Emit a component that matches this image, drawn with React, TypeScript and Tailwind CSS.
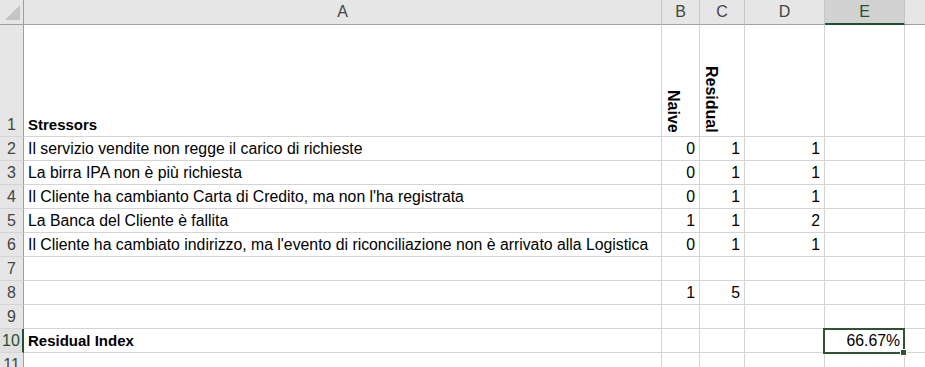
import React from "react";

type Row = {
  n: number;
  a?: string;
  b?: string;
  c?: string;
  d?: string;
};

const rows: Row[] = [
  { n: 2, a: "Il servizio vendite non regge il carico di richieste", b: "0", c: "1", d: "1" },
  { n: 3, a: "La birra IPA non è più richiesta", b: "0", c: "1", d: "1" },
  { n: 4, a: "Il Cliente ha cambianto Carta di Credito, ma non l'ha registrata", b: "0", c: "1", d: "1" },
  { n: 5, a: "La Banca del Cliente è fallita", b: "1", c: "1", d: "2" },
  { n: 6, a: "Il Cliente ha cambiato indirizzo, ma l'evento di riconciliazione non è arrivato alla Logistica", b: "0", c: "1", d: "1" },
  { n: 7 },
  { n: 8, b: "1", c: "5" },
  { n: 9 },
];

const cols = "grid-cols-[24px_638px_38px_45px_80px_80px_1fr]";
const cell = "border-r border-b border-[#d4d4d4] flex items-end px-[4px] pb-[1px] text-[15.8px] leading-[20px] text-black whitespace-nowrap";
const num = cell + " justify-end";
const bold = "border-r border-b border-[#d4d4d4] flex items-end px-[4px] pb-[1px] text-[15px] leading-[20px] text-black font-bold";
const rowHead =
  "border-r border-b border-r-[#9f9f9f] border-b-[#d4d4d4] bg-[#e6e6e6] flex items-end justify-center pb-[1px] text-[16px] leading-[20px] text-[#444]";

function Corner() {
  return (
    <div className="h-[25px] bg-[#e6e6e6] border-r border-b border-[#9f9f9f] flex items-end justify-end pr-[3px] pb-[4px]">
      <svg width="15" height="15" viewBox="0 0 15 15">
        <polygon points="15,0 15,15 0,15" fill="#c4c4c4" />
      </svg>
    </div>
  );
}

function ColHead({ label, active }: { label: string; active?: boolean }) {
  return (
    <div
      className={
        active
          ? "h-[25px] bg-[#d2d2d2] border-r border-r-[#c4c4c4] border-b-2 border-b-[#1f5130] flex items-center justify-center text-[16px] text-[#1f5130]"
          : "h-[25px] bg-[#e6e6e6] border-r border-r-[#c8c8c8] border-b border-b-[#9f9f9f] flex items-center justify-center text-[16px] text-[#444]"
      }
    >
      {label}
    </div>
  );
}

export default function App() {
  return (
    <div
      className="w-[925px] h-[367px] overflow-hidden bg-white"
      style={{ fontFamily: '"Liberation Sans", Arial, sans-serif' }}
    >
      <div className={`grid ${cols}`}>
        <Corner />
        <ColHead label="A" />
        <ColHead label="B" />
        <ColHead label="C" />
        <ColHead label="D" />
        <ColHead label="E" active />
        <div className="h-[25px] bg-[#e6e6e6] border-b border-[#9f9f9f]" />

        {/* row 1: tall header row with rotated labels */}
        <div className={rowHead + " h-[112px]"}>1</div>
        <div className={bold}>Stressors</div>
        <div className="border-r border-b border-[#d4d4d4] flex items-end pl-[5px] pb-[3px]">
          <span className="[writing-mode:vertical-rl] font-bold text-[16px] leading-[12px]">Naive</span>
        </div>
        <div className="border-r border-b border-[#d4d4d4] flex items-end pl-[5px] pb-[3px]">
          <span className="[writing-mode:vertical-rl] font-bold text-[16px] leading-[12px]">Residual</span>
        </div>
        <div className="border-r border-b border-[#d4d4d4]" />
        <div className="border-r border-b border-[#d4d4d4]" />
        <div className="border-b border-[#d4d4d4]" />

        {rows.map((r) => (
          <React.Fragment key={r.n}>
            <div className={rowHead + " h-[24px]"}>{r.n}</div>
            <div className={cell}>{r.a}</div>
            <div className={num}>{r.b}</div>
            <div className={num}>{r.c}</div>
            <div className={num}>{r.d}</div>
            <div className={cell} />
            <div className="border-b border-[#d4d4d4]" />
          </React.Fragment>
        ))}

        {/* row 10: result row with the active cell */}
        <div className="h-[24px] border-r-2 border-r-[#1f5130] border-b border-b-[#d4d4d4] bg-[#e0e0e0] flex items-end justify-center pb-[1px] text-[16px] leading-[20px] text-[#1f5130]">
          10
        </div>
        <div className={bold}>Residual Index</div>
        <div className={cell} />
        <div className={cell} />
        <div className={cell} />
        <div className={num + " relative"}>
          66.67%
          <div className="absolute -left-[2px] -top-[1px] -right-[1px] -bottom-[2px] border-2 border-[#2f5233]" />
          <div className="absolute -right-[3px] -bottom-[4px] w-[5px] h-[5px] bg-[#2f5233] border border-white box-content" />
        </div>
        <div className="border-b border-[#d4d4d4]" />

        <div className={rowHead + " h-[24px]"}>11</div>
        <div className={cell} />
        <div className={cell} />
        <div className={cell} />
        <div className={cell} />
        <div className={cell} />
        <div className="border-b border-[#d4d4d4]" />
      </div>
    </div>
  );
}
